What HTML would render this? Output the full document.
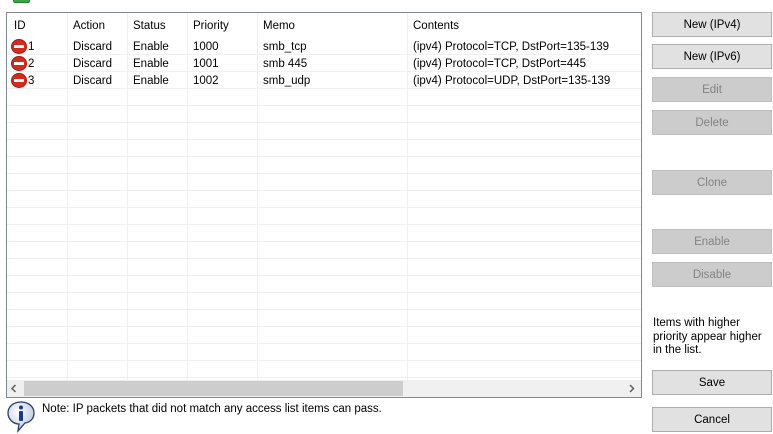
<!DOCTYPE html>
<html><head><style>
*{margin:0;padding:0;box-sizing:border-box}
body{width:773px;height:434px;background:#fff;font-family:"Liberation Sans",sans-serif;font-size:11.5px;color:#000;position:relative;overflow:hidden}
.a{position:absolute;white-space:nowrap}
.list{position:absolute;left:6px;top:12px;width:636px;height:386px;border:1px solid #828790;background:#fff;overflow:hidden}
.grid{position:absolute;left:0;top:25px;width:634px;height:342px;
background:repeating-linear-gradient(to bottom,transparent 0,transparent 16px,#f0f0f0 16px,#f0f0f0 17px)}
.v{position:absolute;top:0;width:1px;height:367px;background:#f0f0f0}
.btn{position:absolute;left:652px;width:120px;height:25px;border:1px solid #adadad;background:#e1e1e1;text-align:center;line-height:24px;font-size:11.5px}
.dis{background:#cccccc;border-color:#bfbfbf;color:#838383}
.ic{position:absolute;left:4px;width:16px;height:15px;border-radius:50%;background:#d8291d;border:1px solid #a01810}
.ic:after{content:"";position:absolute;left:2px;top:5px;width:10px;height:3px;background:#fff}
.r{top:2px}
</style></head><body>
<div class="a" style="left:13px;top:-6px;width:17px;height:9px;background:#3aa646;border:1px solid #2a7d33;border-radius:2px"></div>
<div class="list">
  <div class="grid"></div>
  <div class="v" style="left:60px"></div><div class="v" style="left:120px"></div><div class="v" style="left:180px"></div><div class="v" style="left:250px"></div><div class="v" style="left:400px"></div>
  <div class="a" style="left:7px;top:7px">ID</div>
  <div class="a" style="left:66px;top:7px">Action</div>
  <div class="a" style="left:126px;top:7px">Status</div>
  <div class="a" style="left:186px;top:7px">Priority</div>
  <div class="a" style="left:256px;top:7px">Memo</div>
  <div class="a" style="left:406px;top:7px">Contents</div>

  <div class="ic" style="top:26px"></div>
  <div class="a" style="left:21px;top:28px">1</div><div class="a" style="left:66px;top:28px">Discard</div><div class="a" style="left:126px;top:28px">Enable</div><div class="a" style="left:186px;top:28px">1000</div><div class="a" style="left:256px;top:28px">smb_tcp</div><div class="a" style="left:406px;top:28px">(ipv4) Protocol=TCP, DstPort=135-139</div>
  <div class="ic" style="top:43px"></div>
  <div class="a" style="left:21px;top:45px">2</div><div class="a" style="left:66px;top:45px">Discard</div><div class="a" style="left:126px;top:45px">Enable</div><div class="a" style="left:186px;top:45px">1001</div><div class="a" style="left:256px;top:45px">smb 445</div><div class="a" style="left:406px;top:45px">(ipv4) Protocol=TCP, DstPort=445</div>
  <div class="ic" style="top:60px"></div>
  <div class="a" style="left:21px;top:62px">3</div><div class="a" style="left:66px;top:62px">Discard</div><div class="a" style="left:126px;top:62px">Enable</div><div class="a" style="left:186px;top:62px">1002</div><div class="a" style="left:256px;top:62px">smb_udp</div><div class="a" style="left:406px;top:62px">(ipv4) Protocol=UDP, DstPort=135-139</div>

  <div class="a" style="left:0;top:367px;width:634px;height:17px;background:#f0f0f0"></div>
  <div class="a" style="left:17px;top:368px;width:379px;height:15px;background:#cdcdcd"></div>
  <svg class="a" style="left:3px;top:371px" width="8" height="9"><path d="M5.5 1L2 4.5 5.5 8" fill="none" stroke="#606060" stroke-width="1.5"/></svg>
  <svg class="a" style="left:621px;top:371px" width="8" height="9"><path d="M2 1L5.5 4.5 2 8" fill="none" stroke="#606060" stroke-width="1.5"/></svg>
</div>
<svg class="a" style="left:6px;top:400px" width="30" height="34" viewBox="0 0 30 34">
<defs><radialGradient id="g" cx="40%" cy="35%" r="70%"><stop offset="0" stop-color="#fff"/><stop offset="1" stop-color="#b9c7dc"/></radialGradient></defs>
<path d="M15 2C7 2 2 7 2 13s5 11 11 11l-1 7 7-8c6-1 9-5 9-10 0-6-5-11-13-11z" fill="url(#g)" stroke="#2a3d66" stroke-width="1.3"/>
<circle cx="15" cy="7.5" r="2" fill="#1b3a8a"/><rect x="13" y="11" width="4" height="10" rx="1" fill="#1b3a8a"/>
</svg>
<div class="a" style="left:42px;top:403px">Note: IP packets that did not match any access list items can pass.</div>

<div class="btn" style="top:12px">New (IPv4)</div>
<div class="btn" style="top:44px">New (IPv6)</div>
<div class="btn dis" style="top:77px">Edit</div>
<div class="btn dis" style="top:110px">Delete</div>
<div class="btn dis" style="top:170px">Clone</div>
<div class="btn dis" style="top:229px">Enable</div>
<div class="btn dis" style="top:262px">Disable</div>
<div class="a" style="left:653px;top:317px;line-height:13.5px">Items with higher<br>priority appear higher<br>in the list.</div>
<div class="btn" style="top:370px">Save</div>
<div class="btn" style="top:407px">Cancel</div>
</body></html>
